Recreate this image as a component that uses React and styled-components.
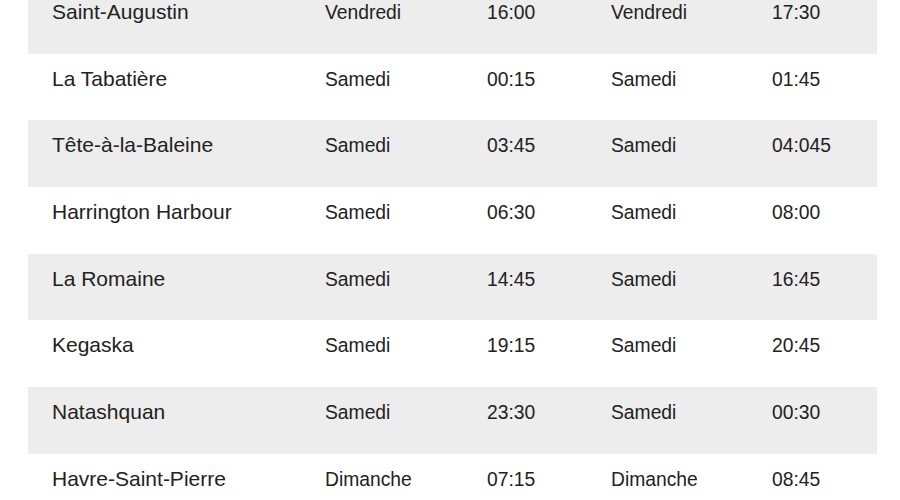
import React from "react";
import styled, { createGlobalStyle } from "styled-components";

const GlobalStyle = createGlobalStyle`
	body {
		margin: 0;
		background: #ffffff;
		font-family: "Liberation Sans", Arial, sans-serif;
		overflow: hidden;
	}
`;

const rows = [
	["Saint-Augustin", "Vendredi", "16:00", "Vendredi", "17:30"],
	["La Tabatière", "Samedi", "00:15", "Samedi", "01:45"],
	["Tête-à-la-Baleine", "Samedi", "03:45", "Samedi", "04:045"],
	["Harrington Harbour", "Samedi", "06:30", "Samedi", "08:00"],
	["La Romaine", "Samedi", "14:45", "Samedi", "16:45"],
	["Kegaska", "Samedi", "19:15", "Samedi", "20:45"],
	["Natashquan", "Samedi", "23:30", "Samedi", "00:30"],
	["Havre-Saint-Pierre", "Dimanche", "07:15", "Dimanche", "08:45"],
];

const App = () => {
	return (
		<>
			<GlobalStyle />
			<Table>
				{rows.map((row, i) => (
					<Row key={row[0]} shaded={i % 2 === 0}>
						<Stop>{row[0]}</Stop>
						<Cell>{row[1]}</Cell>
						<Cell>{row[2]}</Cell>
						<Cell>{row[3]}</Cell>
						<Cell>{row[4]}</Cell>
					</Row>
				))}
			</Table>
		</>
	);
};
export default App;

const Table = styled.div`
	width: 849px;
	margin: -13px 0 0 28px;
	display: flex;
	flex-direction: column;
`;

const Row = styled.div.withConfig({ shouldForwardProp: (p) => p !== "shaded" })`
	height: 66.7px;
	box-sizing: border-box;
	padding: 13px 0 0 24px;
	display: grid;
	grid-template-columns: 273px 162px 124px 161px 1fr;
	align-items: baseline;
	background: ${({ shaded }) => (shaded ? "#ededed" : "#ffffff")};
	color: #222222;
`;

const Stop = styled.div`
	font-size: 21px;
`;

const Cell = styled.div`
	font-size: 19.3px;
`;
